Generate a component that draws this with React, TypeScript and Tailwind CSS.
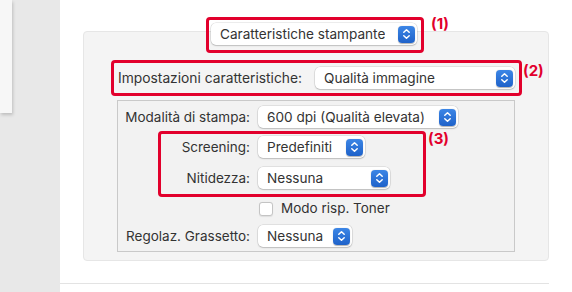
import React from "react";

/* Pannello "Caratteristiche stampante" — finestra di stampa macOS con riquadri di annotazione */

function Stepper() {
  return (
    <span className="flex h-[17px] w-[17px] shrink-0 items-center justify-center rounded-[4px] bg-gradient-to-b from-[#3c86e6] to-[#1f62c9] shadow-[0_0.5px_1px_rgba(0,0,0,0.3)]">
      <svg width="9" height="12" viewBox="0 0 9 12" fill="none" stroke="white" strokeWidth="1.5" strokeLinecap="round" strokeLinejoin="round">
        <path d="M1.8 4.3 L4.5 1.8 L7.2 4.3" />
        <path d="M1.8 7.7 L4.5 10.2 L7.2 7.7" />
      </svg>
    </span>
  );
}

interface PopupProps {
  value: string;
  width: string;
}

function Popup({ value, width }: PopupProps) {
  return (
    <div
      className={`flex h-[22px] ${width} shrink-0 items-center justify-between rounded-[5px] bg-white pl-[9px] pr-[2px] text-[13.6px] text-[#333] shadow-[0_0_0_0.5px_rgba(0,0,0,0.14),0_1px_1.5px_rgba(0,0,0,0.16)]`}
    >
      <span className="truncate">{value}</span>
      <Stepper />
    </div>
  );
}

function Tag({ n, className }: { n: number; className: string }) {
  return (
    <span className={`absolute text-[15px] font-bold leading-none text-[#e2002c] ${className}`}>({n})</span>
  );
}

export default function App() {
  return (
    <div
      className="flex h-[292px] w-[572px] overflow-hidden bg-white text-[#333]"
      style={{ fontFamily: "Inter, 'Liberation Sans', sans-serif" }}
    >
      {/* barra laterale con anteprima foglio */}
      <div className="w-[60px] shrink-0 bg-[#e8e8e8]">
        <div className="h-[113px] w-[12px] bg-[#f7f7f7] shadow-[1px_2px_3px_rgba(0,0,0,0.18)]" />
      </div>

      <div className="relative flex flex-1 flex-col pl-[23px] pt-[17px]">
        {/* (1) */}
        <div className="relative z-10 flex w-[466px] justify-center">
          <div className="relative ml-[-2px] h-[36px] w-[218px] rounded-[4px] border-[3px] border-[#e2002c] pl-[2px] pt-[3px]">
            <Popup value="Caratteristiche stampante" width="w-[206px]" />
            <Tag n={1} className="left-[222px] top-[-4px]" />
          </div>
        </div>

        {/* riquadro gruppo */}
        <div className="mt-[-22px] h-[230px] w-[466px] rounded-[4px] border border-[#e6e6e6] bg-[#f4f4f4] pl-[27px] pt-[28px]">
          {/* (2) */}
          <div className="relative flex h-[36px] w-[411px] items-center justify-between rounded-[4px] border-[3px] border-[#e2002c] pl-[4px] pr-[4px]">
            <span className="text-[13.8px]">Impostazioni caratteristiche:</span>
            <Popup value="Qualità immagine" width="w-[200px]" />
            <Tag n={2} className="left-[409px] top-[0px]" />
          </div>

          {/* riquadro interno */}
          <div className="ml-[6px] mt-[4px] h-[152px] w-[398px] border border-[#c9c9c9] bg-[#f2f2f2] pt-[5px] text-[13.5px]">
            <div className="flex items-center gap-[8px]">
              <span className="w-[132px] text-right">Modalità di stampa:</span>
              <Popup value="600 dpi (Qualità elevata)" width="w-[200px]" />
            </div>

            {/* (3) */}
            <div className="relative ml-[40px] mt-[3px] w-[268px] rounded-[4px] border-[3px] border-[#e2002c] pb-[5px] pt-[2px]">
              <div className="flex items-center gap-[8px]">
                <span className="w-[89px] text-right">Screening:</span>
                <Popup value="Predefiniti" width="w-[107px]" />
              </div>
              <div className="mt-[9px] flex items-center gap-[8px]">
                <span className="w-[89px] text-right">Nitidezza:</span>
                <Popup value="Nessuna" width="w-[132px]" />
              </div>
              <Tag n={3} className="left-[267px] top-[-3px]" />
            </div>

            <div className="mt-[3px] flex h-[17px] items-center gap-[8px] pl-[141px]">
              <span className="h-[14px] w-[14px] rounded-[3px] border border-[#c4c4c4] bg-white shadow-[0_0.5px_1px_rgba(0,0,0,0.08)]" />
              <span>Modo risp. Toner</span>
            </div>

            <div className="mt-[8px] flex items-center gap-[8px]">
              <span className="w-[132px] text-right">Regolaz. Grassetto:</span>
              <Popup value="Nessuna" width="w-[94px]" />
            </div>
          </div>
        </div>

        <div className="ml-[-23px] mt-[22px] h-px w-full bg-[#e3e3e3]" />
      </div>
    </div>
  );
}
